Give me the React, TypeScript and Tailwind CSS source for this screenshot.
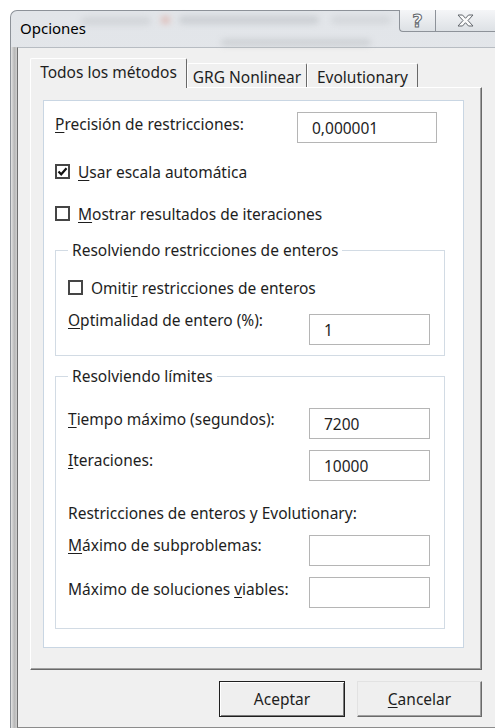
import React from 'react';

// Diálogo "Opciones" del Solver, estilo ventana de Windows 7

const Key = ({ children }: { children: React.ReactNode }) => (
  <u className="underline decoration-1 underline-offset-[2px]">{children}</u>
);

const TextBox = ({ value = '', w }: { value?: string; w: string }) => (
  <div className={`${w} flex h-[31px] shrink-0 items-center border border-[#b5b5b5] bg-white pl-[14px] leading-[20px]`}>
    {value}
  </div>
);

const CheckBox = ({ checked = false }: { checked?: boolean }) => (
  <span className="flex h-[15px] w-[15px] shrink-0 items-center justify-center border-2 border-[#454545] bg-white">
    {checked && (
      <svg width="11" height="11" viewBox="0 0 11 11">
        <path d="M1.5 5.5 L4.2 8.3 L9.5 2.2" fill="none" stroke="#111" strokeWidth="2.2" />
      </svg>
    )}
  </span>
);

const CheckRow = ({
  checked,
  className,
  children,
}: {
  checked?: boolean;
  className: string;
  children: React.ReactNode;
}) => (
  <div className={`flex h-[15px] items-center gap-[8px] ${className}`}>
    <CheckBox checked={checked} />
    <span className="leading-[20px]">{children}</span>
  </div>
);

const Tab = ({ label, active = false, w }: { label: string; active?: boolean; w: string }) =>
  active ? (
    <div className={`${w} relative z-10 -mb-px h-[30px] rounded-t-[2px] border-l border-r border-t border-l-white border-r-[#696969] border-t-white bg-[#f0f0f0] pt-[3px] text-center leading-[20px]`}>
      {label}
    </div>
  ) : (
    <div className={`${w} h-[24px] rounded-t-[2px] border-l border-r border-t border-l-white border-r-[#696969] border-t-white bg-[#f0f0f0] pt-[3px] text-center leading-[20px]`}>
      {label}
    </div>
  );

export default function App() {
  return (
    <div className="h-[728px] w-[495px] overflow-hidden bg-white pl-[10px] pt-[10px] font-['Noto_Sans',sans-serif] text-[15.5px] text-[#1e1e1e]">
      <div className="flex h-[718px] flex-col rounded-tl-[7px] border-l border-t border-[#8d9299] bg-[linear-gradient(to_bottom,#e2e5e9,#eceef0)]">
        {/* barra de título */}
        <div className="relative flex h-[36px] shrink-0">
          <div className="pointer-events-none absolute left-[70px] top-[6px] h-[8px] w-[70px] rounded-full bg-[#b9bcc0] opacity-40 blur-[3px]" />
          <div className="pointer-events-none absolute left-[150px] top-[5px] h-[8px] w-[9px] rounded-full bg-[#d9806e] opacity-40 blur-[3px]" />
          <div className="pointer-events-none absolute left-[168px] top-[5px] h-[8px] w-[140px] rounded-full bg-[#a9adb2] opacity-40 blur-[3px]" />
          <div className="pointer-events-none absolute left-[320px] top-[5px] h-[8px] w-[60px] rounded-full bg-[#b4b7bb] opacity-30 blur-[3px]" />
          <div className="pointer-events-none absolute left-[210px] top-[28px] h-[7px] w-[150px] rounded-full bg-[#aeb2b6] opacity-40 blur-[3px]" />
          <div className="relative pl-[9px] pt-[7px] text-[15px] leading-[20px] text-black">Opciones</div>
          <div className="relative -mt-px ml-auto flex h-[22px] self-start">
            <div className="flex w-[36px] items-center justify-center rounded-bl-[4px] border-b border-l border-[#8d9299] bg-[linear-gradient(to_bottom,#f5f6f8,#dde1e5)]">
              <span className="font-['DejaVu_Sans',sans-serif] text-[18px] font-bold leading-none text-[#fbfbfb] [-webkit-text-stroke:1px_#62676d]">?</span>
            </div>
            <div className="flex w-[60px] items-center justify-center border-b border-l border-[#8d9299] bg-[linear-gradient(to_bottom,#f5f6f8,#dde1e5)]">
              <svg width="17" height="13" viewBox="0 0 17 13">
                <path
                  d="M1 1 H5.5 L8.5 4.3 L11.5 1 H16 L11 6.5 L16 12 H11.5 L8.5 8.7 L5.5 12 H1 L6 6.5 Z"
                  fill="#fbfbfb"
                  stroke="#62676d"
                  strokeWidth="1"
                  strokeLinejoin="round"
                />
              </svg>
            </div>
          </div>
        </div>

        {/* cuerpo */}
        <div className="flex flex-1">
          <div className="w-[6px] shrink-0 bg-[linear-gradient(to_right,#e4e4e4,#b8b8b8_55%,#cfcfcf)]" />
          <div className="flex-1 border-b border-l border-t border-b-[#8c8c8c] border-l-[#6f6f6f] border-t-[#b7bcc2] bg-[#f0f0f0] pl-[12px] pt-[10px]">
            <div className="flex h-[29px] items-end">
              <Tab label="Todos los métodos" active w="w-[157px]" />
              <Tab label="GRG Nonlinear" w="w-[120px]" />
              <Tab label="Evolutionary" w="w-[111px]" />
            </div>

            <div className="h-[583px] w-[452px] border border-b-[#696969] border-l-white border-r-[#696969] border-t-white pl-[12px] pt-[12px] shadow-[inset_-1px_-1px_0_#a0a0a0]">
              <div className="h-[548px] w-[421px] border border-[#c9d6e3] bg-white pl-[11px] pt-[11px]">
                <div className="flex h-[31px]">
                  <div className="w-[242px] pt-[2px] leading-[20px]">
                    <Key>P</Key>recisión de restricciones:
                  </div>
                  <TextBox value="0,000001" w="w-[140px]" />
                </div>

                <CheckRow checked className="mt-[21px]">
                  <Key>U</Key>sar escala automática
                </CheckRow>
                <CheckRow className="mt-[27px]">
                  <Key>M</Key>ostrar resultados de iteraciones
                </CheckRow>

                <fieldset className="mt-[19px] w-[390px] border border-[#d2dbe4] pb-[10px] pl-[12px]">
                  <legend className="px-[4px] leading-[20px]">Resolviendo restricciones de enteros</legend>
                  <CheckRow className="mt-[20px]">
                    Omiti<Key>r</Key> restricciones de enteros
                  </CheckRow>
                  <div className="mt-[19px] flex h-[31px]">
                    <div className="-mt-[4px] w-[241px] leading-[20px]">
                      <Key>O</Key>ptimalidad de entero (%):
                    </div>
                    <TextBox value="1" w="w-[121px]" />
                  </div>
                </fieldset>

                <fieldset className="mt-[10px] w-[390px] border border-[#d2dbe4] pb-[20px] pl-[12px]">
                  <legend className="px-[4px] leading-[20px]">Resolviendo límites</legend>
                  <div className="mt-[22px] flex h-[31px]">
                    <div className="w-[241px] pt-[1px] leading-[20px]">
                      <Key>T</Key>iempo máximo (segundos):
                    </div>
                    <TextBox value="7200" w="w-[121px]" />
                  </div>
                  <div className="mt-[11px] flex h-[31px]">
                    <div className="w-[241px] leading-[20px]">
                      <Key>I</Key>teraciones:
                    </div>
                    <TextBox value="10000" w="w-[121px]" />
                  </div>
                  <div className="mt-[22px] leading-[20px]">Restricciones de enteros y Evolutionary:</div>
                  <div className="mt-[12px] flex h-[31px]">
                    <div className="w-[241px] leading-[20px]">
                      <Key>M</Key>áximo de subproblemas:
                    </div>
                    <TextBox w="w-[121px]" />
                  </div>
                  <div className="mt-[11px] flex h-[31px]">
                    <div className="w-[241px] pt-[2px] leading-[20px]">
                      Máximo de soluciones <Key>v</Key>iables:
                    </div>
                    <TextBox w="w-[121px]" />
                  </div>
                </fieldset>
              </div>
            </div>

            <div className="mt-[11px] flex w-[452px] justify-end gap-[12px]">
              <button className="h-[36px] w-[126px] border border-[#1f1f1f] bg-[#efefef] leading-[20px] shadow-[inset_1px_1px_0_#ffffff,inset_-1px_-1px_0_#7a7a7a]">
                Aceptar
              </button>
              <button className="h-[36px] w-[125px] border border-b-[#6a6a6a] border-l-[#e2e2e2] border-r-[#6a6a6a] border-t-[#e2e2e2] bg-[#efefef] leading-[20px] shadow-[inset_-1px_-1px_0_#a0a0a0]">
                <Key>C</Key>ancelar
              </button>
            </div>
          </div>
        </div>
      </div>
    </div>
  );
}
